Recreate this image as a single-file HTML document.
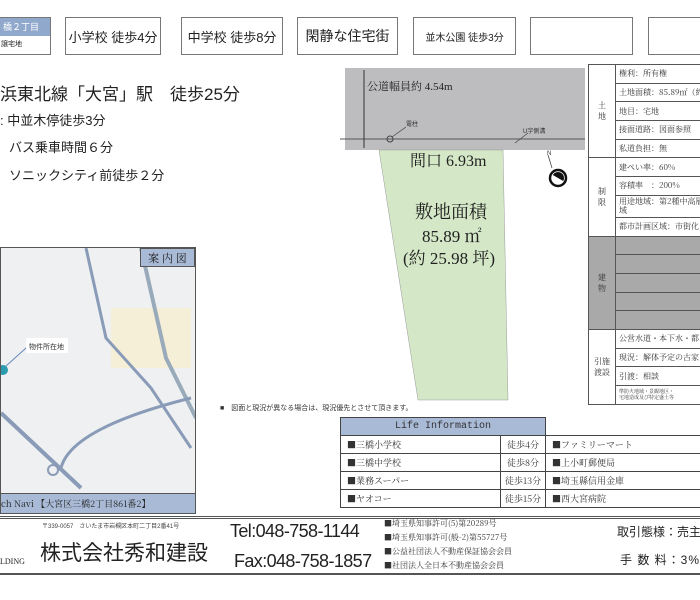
<!DOCTYPE html>
<html><head><meta charset="utf-8"><style>
*{margin:0;padding:0;box-sizing:border-box}
body{width:700px;height:600px;background:#fff;position:relative;overflow:hidden;font-family:"Liberation Sans","Noto Sans CJK JP",sans-serif;color:#222}
.a{position:absolute;white-space:nowrap}
.box{position:absolute;top:17px;height:38px;border:1px solid #777;background:#fff;font-size:13px;display:flex;align-items:center;justify-content:center}
.serif{font-family:"Liberation Serif","Noto Serif CJK SC",serif}
table{border-collapse:collapse;table-layout:fixed}
.pt td{border:1px solid #555;font-size:8px;padding:0 3px;font-family:"Noto Serif CJK SC",serif;color:#333;height:18.7px;white-space:nowrap;overflow:hidden}
.lt td{border:1px solid #444;font-size:9px;padding:0 6px;height:18px;line-height:16px;color:#333;font-family:"Noto Serif CJK SC",serif;white-space:nowrap;overflow:hidden}
</style></head><body>
<div class="box" style="left:-2px;width:53px;flex-direction:column;align-items:flex-start;padding:0">
<div style="background:#8fa8cc;color:#fff;font-size:9px;width:100%;height:18px;line-height:18px;padding-left:4px">橋２丁目</div>
<div style="font-size:7px;padding-left:2px;line-height:18px">譲宅地</div></div>
<div class="box" style="left:65px;width:96px">小学校 徒歩4分</div>
<div class="box" style="left:181px;width:102px">中学校 徒歩8分</div>
<div class="box" style="left:297px;width:101px;font-size:14px">閑静な住宅街</div>
<div class="box" style="left:413px;width:103px;font-size:10px">並木公園 徒歩3分</div>
<div class="box" style="left:530px;width:103px"></div>
<div class="box" style="left:648px;width:60px"></div>
<div class="a" style="left:0;top:80px;font-size:17px">浜東北線「大宮」駅　徒歩25分</div>
<div class="a" style="left:0;top:110px;font-size:13px">: 中並木停徒歩3分</div>
<div class="a" style="left:9px;top:137px;font-size:13px">バス乗車時間６分</div>
<div class="a" style="left:9px;top:165px;font-size:13px">ソニックシティ前徒歩２分</div>
<svg class="a" style="left:335px;top:60px" width="250" height="345" viewBox="335 60 250 345">
<rect x="345" y="68" width="256" height="82" fill="#bdbcbe"/>
<polygon points="379,150 503,150 508,400 418,400" fill="#d4e8c7" stroke="#999" stroke-width=".5"/>
<line x1="340" y1="139" x2="600" y2="139" stroke="#555"/>
<line x1="364" y1="70" x2="364" y2="148" stroke="#333"/>
<circle cx="390" cy="139" r="3" fill="none" stroke="#444"/>
<line x1="392" y1="137" x2="406" y2="127" stroke="#444" stroke-width=".7"/>
<line x1="515" y1="143" x2="528" y2="133" stroke="#444" stroke-width=".7"/>
<circle cx="558" cy="178" r="8" fill="#fff" stroke="#111" stroke-width="2.5"/>
<path d="M552,178 A6,6 0 0 1 564,178Z" fill="#111" transform="rotate(30 558 178)"/>
<line x1="552" y1="168" x2="548" y2="155" stroke="#333" stroke-width=".7"/>
<text x="406" y="126" font-size="6" fill="#333">電柱</text>
<text x="523" y="133" font-size="6" fill="#333">U字側溝</text>
<text x="547" y="155" font-size="6" fill="#333">N</text>
</svg>
<div class="a serif" style="left:367px;top:78px;font-size:11px">公道幅員約 4.54m</div>
<div class="a serif" style="left:410px;top:148px;font-size:16px">間口 6.93m</div>
<div class="a serif" style="left:415px;top:198px;font-size:18px">敷地面積</div>
<div class="a serif" style="left:422px;top:222px;font-size:17px">85.89 ㎡</div>
<div class="a serif" style="left:403px;top:244px;font-size:17px">(約 25.98 坪)</div>
<div class="a" style="left:220px;top:403px;font-size:7px;color:#333">■　図面と現況が異なる場合は、現況優先とさせて頂きます。</div>
<table class="pt a" style="left:588px;top:64px;width:130px">
<col style="width:27px"><col style="width:103px">
<tr><td rowspan="5" style="text-align:center;white-space:normal">土<br>地</td><td>権利：所有権</td></tr>
<tr><td>土地面積：85.89㎡（約</td></tr><tr><td>地目：宅地</td></tr><tr><td>接面道路：図面参照</td></tr><tr><td>私道負担：無</td></tr>
<tr><td rowspan="4" style="text-align:center;white-space:normal">制<br>限</td><td>建ぺい率：60%</td></tr>
<tr><td>容積率　：200%</td></tr><tr><td style="height:22px;white-space:normal;line-height:9px">用途地域：第2種中高層<br>域</td></tr><tr><td>都市計画区域：市街化</td></tr>
<tr><td rowspan="5" style="background:#a9a9a9;text-align:center;white-space:normal">建<br>物</td><td style="background:#a9a9a9"></td></tr>
<tr><td style="background:#a9a9a9"></td></tr><tr><td style="background:#a9a9a9"></td></tr><tr><td style="background:#a9a9a9"></td></tr><tr><td style="background:#a9a9a9"></td></tr>
<tr><td rowspan="4" style="text-align:center;white-space:normal">引施<br>渡設</td><td>公営水道・本下水・都</td></tr>
<tr><td>現況：解体予定の古家</td></tr><tr><td>引渡：相談</td></tr><tr><td style="font-size:5px;line-height:6px;white-space:normal">準防火地域・景観地区・<br>宅地造成及び特定盛土等</td></tr>
</table>
<div class="a" style="left:0;top:247px;width:196px;height:267px;border:1px solid #555;background:#eef0f2;overflow:hidden">
<svg width="196" height="267">
<rect x="110" y="60" width="80" height="60" fill="#f6efd8"/>
<path d="M85,0 L105,90 L150,140 L190,200" stroke="#8a9bb8" stroke-width="3" fill="none"/>
<path d="M140,0 L165,110 L195,170" stroke="#9ab" stroke-width="4" fill="none"/>
<path d="M0,165 L80,240" stroke="#8a9bb8" stroke-width="4" fill="none"/>
<path d="M60,220 Q70,180 190,150" stroke="#8a9bb8" stroke-width="3" fill="none"/>
<circle cx="52" cy="222" r="5" fill="none" stroke="#8a9bb8" stroke-width="2"/>
<rect x="25" y="90" width="42" height="15" fill="#fff"/>
<text x="28" y="101" font-size="7" fill="#333">物件所在地</text>
<line x1="25" y1="100" x2="5" y2="118" stroke="#6688bb"/>
<circle cx="2" cy="122" r="5" fill="#2b9bb0"/>
</svg>
<div class="a" style="right:0;top:0;width:55px;height:19px;background:#a8bad6;border:1px solid #555;font-size:11px;text-align:center;line-height:18px;font-family:'Noto Serif CJK SC',serif">案 内 図</div>
<div class="a" style="left:0;bottom:0;width:196px;height:20px;background:#a8bad6;border-top:1px solid #555;font-size:9px;line-height:19px;font-family:'Noto Serif CJK SC',serif">ch Navi 【大宮区三橋2丁目861番2】</div>
</div>
<table class="lt a" style="left:340px;top:417px;width:370px">
<col style="width:160px"><col style="width:45px"><col style="width:165px">
<tr><td colspan="2" style="background:#a8bad6;text-align:center;font-family:'Liberation Mono',monospace;font-size:10px;height:17px">Life Information</td><td style="border-top:none;border-right:none"></td></tr>
<tr><td>■三橋小学校</td><td style="text-align:center;padding:0">徒歩4分</td><td>■ファミリーマート</td></tr>
<tr><td>■三橋中学校</td><td style="text-align:center;padding:0">徒歩8分</td><td>■上小町郵便局</td></tr>
<tr><td>■業務スーパー</td><td style="text-align:center;padding:0">徒歩13分</td><td>■埼玉縣信用金庫</td></tr>
<tr><td>■ヤオコー</td><td style="text-align:center;padding:0">徒歩15分</td><td>■西大宮病院</td></tr>
</table>
<div class="a" style="left:0;top:516px;width:700px;height:59px;border-top:3px double #555;border-bottom:2px solid #555"></div>
<div class="a" style="left:0;top:557px;font-size:8px;font-family:'Liberation Serif',serif">LDING</div>
<div class="a" style="left:42px;top:521px;font-size:6px;color:#444">〒339-0057　さいたま市岩槻区本町二丁目2番41号</div>
<div class="a" style="left:40px;top:537px;font-size:21px">株式会社秀和建設</div>
<div class="a" style="left:230px;top:521px;font-size:18px;letter-spacing:-0.6px">Tel:048-758-1144</div>
<div class="a" style="left:234px;top:551px;font-size:18px;letter-spacing:-0.6px">Fax:048-758-1857</div>
<div class="a" style="left:384px;top:517px;font-size:8px;line-height:14px;color:#333;font-family:'Noto Serif CJK SC',serif">■埼玉県知事許可(5)第20289号<br>■埼玉県知事許可(般-2)第55727号<br>■公益社団法人不動産保証協会会員<br>■社団法人全日本不動産協会会員</div>
<div class="a" style="left:617px;top:523px;font-size:12px">取引態様：売主</div>
<div class="a" style="left:620px;top:551px;font-size:12px;letter-spacing:1px">手 数 料：3%税</div>
</body></html>
